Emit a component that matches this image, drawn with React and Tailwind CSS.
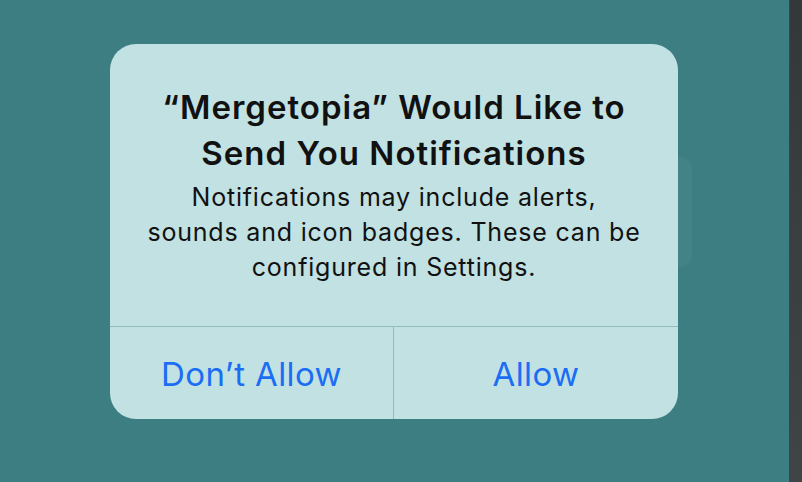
export default function App() {
  return (
    <div className="flex w-[802px] h-[482px] overflow-hidden" style={{ fontFamily: 'Inter, "Noto Sans", sans-serif' }}>
      {/* Backdrop */}
      <div className="relative flex-1 bg-[#3c7e81] pl-[110px] pt-[44px]">
        {/* card peeking out behind the alert */}
        <div className="absolute left-[560px] top-[157px] w-[132px] h-[110px] rounded-[12px] bg-[#438387]" />

        <div className="relative flex flex-col w-[568px] h-[375px] rounded-[26px] bg-[#c1e1e3] text-[#111]">
          <div className="flex flex-col items-center flex-1 pt-[40px] text-center">
            <div className="text-[33px] leading-[46px] font-semibold tracking-[1px]">
              <div>“Mergetopia” Would Like to</div>
              <div>Send You Notifications</div>
            </div>
            <div className="mt-[4px] text-[25px] leading-[35px] tracking-[0.8px]">
              <div>Notifications may include alerts,</div>
              <div>sounds and icon badges. These can be</div>
              <div>configured in Settings.</div>
            </div>
          </div>

          <div className="grid grid-cols-2 h-[93px] border-t border-[#8dbdbf] text-[33px] tracking-[0.4px] text-[#1b6df4]">
            <button className="flex items-center justify-center pt-[3px] border-r border-[#8dbdbf]">Don’t Allow</button>
            <button className="flex items-center justify-center pt-[3px]">Allow</button>
          </div>
        </div>
      </div>

      {/* Right edge strip */}
      <div className="w-[13px] border-l border-[#2d4c4f] bg-gradient-to-b from-[#33393b] to-[#404446]" />
    </div>
  )
}
